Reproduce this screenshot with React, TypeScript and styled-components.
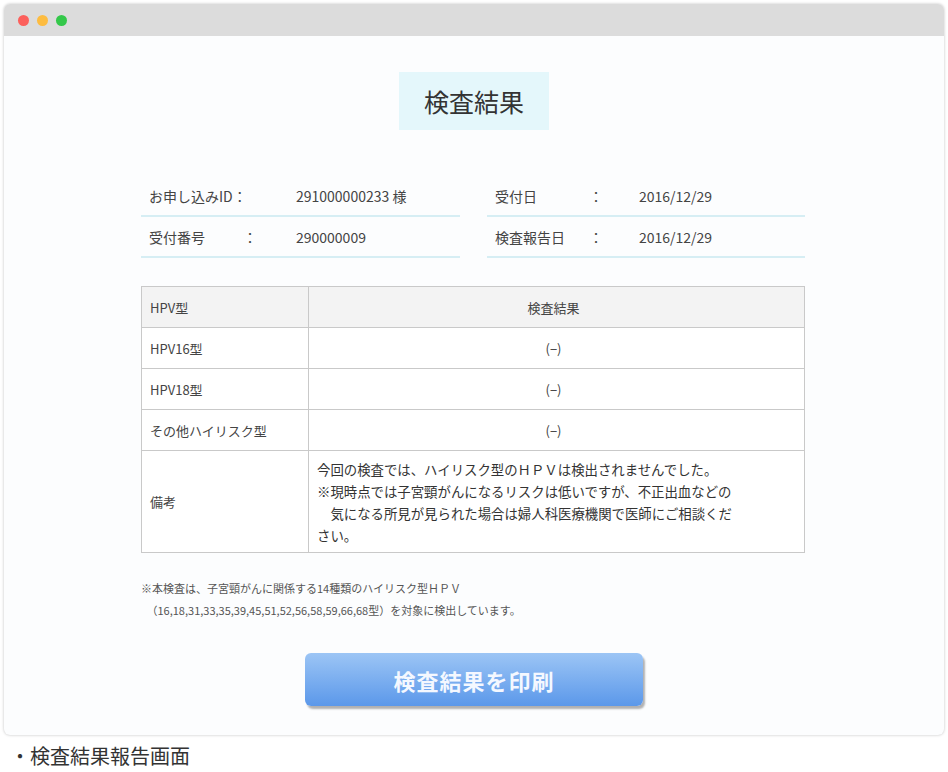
import React from "react";
import styled, { createGlobalStyle } from "styled-components";

const G = createGlobalStyle`
  body { margin:0; background:#fff; font-family:"Noto Sans CJK JP","Noto Sans",sans-serif; color:#333; }
`;
const Page = styled.div`width:948px;height:772px;padding:4px 4px 0 4px;box-sizing:border-box;`;
const Win = styled.div`width:940px;height:731px;border-radius:6px;background:#fcfdfe;box-shadow:0 0 3px rgba(0,0,0,.25);overflow:hidden;display:flex;flex-direction:column;`;
const Bar = styled.div`height:32px;background:#dcdcdc;display:flex;align-items:center;gap:8px;padding-left:14px;flex-shrink:0;`;
const Dot = styled.span<{c:string}>`width:11px;height:11px;border-radius:50%;background:${p=>p.c};`;
const Body = styled.div`display:flex;flex-direction:column;align-items:center;padding-top:36px;`;
const Title = styled.div`width:150px;height:58px;background:#e4f7fb;display:flex;align-items:center;justify-content:center;font-size:25px;color:#333;`;
const Info = styled.div`display:grid;grid-template-columns:319px 318px;column-gap:27px;margin-top:46px;margin-right:2px;`;
const InfoRow = styled.div`height:41px;border-bottom:2px solid #d6eef4;display:grid;grid-template-columns:var(--c);align-items:center;padding-left:8px;font-size:14px;box-sizing:border-box;color:#444;`;
const Table = styled.table`margin-top:28px;margin-right:2px;width:664px;border-collapse:collapse;font-size:13px;color:#444;`;
const Td = styled.td<{h?:number;head?:boolean;center?:boolean}>`border:1px solid #c9c9c9;height:${p=>p.h??40}px;padding:0 14px 0 8px;text-align:${p=>p.center?"center":"left"};background:${p=>p.head?"#f3f3f3":"#fff"};`;
const Note = styled.div`font-size:13.4px;line-height:22px;color:#333;`;
const Foot = styled.div`width:664px;margin-right:2px;margin-top:24px;font-size:11px;line-height:22px;color:#555;`;
const Btn = styled.button`margin-top:32px;width:338px;height:53px;border:none;border-radius:6px;background:linear-gradient(#9cc5f5,#5b98ea);color:#f4f8ff;font-size:22px;font-weight:700;font-family:inherit;box-shadow:2px 3px 2px rgba(0,0,0,.3);letter-spacing:1px;`;
const Caption = styled.div`font-size:20px;color:#333;padding:6px 0 0 6px;`;

export default function App(){
  const rows:[string,string][]=[["HPV16型","(−)"],["HPV18型","(−)"],["その他ハイリスク型","(−)"]];
  return <Page><G/>
    <Win>
      <Bar><Dot c="#fc605c"/><Dot c="#fdbc40"/><Dot c="#34c84a"/></Bar>
      <Body>
        <Title>検査結果</Title>
        <Info>
          <InfoRow style={{"--c":"147px 1fr"} as any}><span>お申し込みID：</span><span>291000000233 様</span></InfoRow>
          <InfoRow style={{"--c":"94px 50px 1fr"} as any}><span>受付日</span><span>：</span><span>2016/12/29</span></InfoRow>
          <InfoRow style={{"--c":"94px 53px 1fr"} as any}><span>受付番号</span><span>：</span><span>290000009</span></InfoRow>
          <InfoRow style={{"--c":"94px 50px 1fr"} as any}><span>検査報告日</span><span>：</span><span>2016/12/29</span></InfoRow>
        </Info>
        <Table><tbody>
          <tr><Td head style={{width:144}}>HPV型</Td><Td head center>検査結果</Td></tr>
          {rows.map(r=><tr key={r[0]}><Td>{r[0]}</Td><Td center>{r[1]}</Td></tr>)}
          <tr><Td h={101}>備考</Td><Td><Note>今回の検査では、ハイリスク型のＨＰＶは検出されませんでした。<br/>※現時点では子宮頸がんになるリスクは低いですが、不正出血などの<br/>　気になる所見が見られた場合は婦人科医療機関で医師にご相談くだ<br/>さい。</Note></Td></tr>
        </tbody></Table>
        <Foot>※本検査は、子宮頸がんに関係する14種類のハイリスク型ＨＰＶ<br/>　（16,18,31,33,35,39,45,51,52,56,58,59,66,68型）を対象に検出しています。</Foot>
        <Btn>検査結果を印刷</Btn>
      </Body>
    </Win>
    <Caption>・検査結果報告画面</Caption>
  </Page>;
}
